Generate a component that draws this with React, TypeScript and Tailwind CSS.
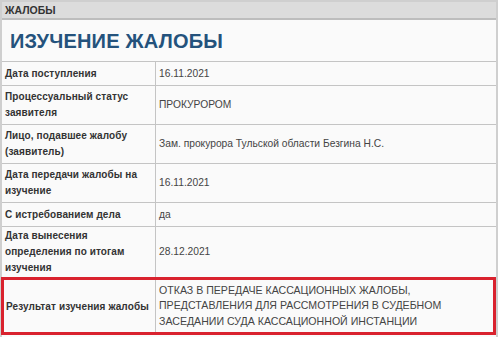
import React from "react";

const rows: { label: string[]; value: string[]; h: string }[] = [
  { label: ["Дата поступления"], value: ["16.11.2021"], h: "h-[24px]" },
  { label: ["Процессуальный статус", "заявителя"], value: ["ПРОКУРОРОМ"], h: "h-[39px]" },
  { label: ["Лицо, подавшее жалобу", "(заявитель)"], value: ["Зам. прокурора Тульской области Безгина Н.С."], h: "h-[39px]" },
  { label: ["Дата передачи жалобы на", "изучение"], value: ["16.11.2021"], h: "h-[39px]" },
  { label: ["С истребованием дела"], value: ["да"], h: "h-[24px]" },
  { label: ["Дата вынесения", "определения по итогам", "изучения"], value: ["28.12.2021"], h: "h-[51px]" },
];

export default function App() {
  return (
    <div
      className="w-[500px] h-[337px] bg-white overflow-hidden"
      style={{ fontFamily: '"Liberation Sans", Arial, sans-serif' }}
    >
      <div className="w-[498px] h-[337px] border-l-2 border-r-2 border-t-2 border-[#cfcfcf] bg-[#fafafa] flex flex-col">
        <div className="h-[18px] bg-[#dcdcdc] border-b-2 border-[#bdbdbd] flex items-center pl-[3px] text-[10.5px] font-bold text-[#333] leading-none">
          ЖАЛОБЫ
        </div>
        <div className="h-[41px] flex items-center pl-[8px]">
          <span className="text-[20px] font-bold text-[#24527c] leading-none tracking-[0.2px]">ИЗУЧЕНИЕ ЖАЛОБЫ</span>
        </div>
        {rows.map((r, i) => (
          <div key={i} className={`flex border-t border-[#c4c4c4] ${r.h}`}>
            <div className="w-[154px] border-r border-[#c4c4c4] flex flex-col justify-center pl-[3px] text-[10px] font-bold text-[#333] leading-[16px] tracking-[0.1px]">
              {r.label.map((l, j) => (
                <div key={j}>{l}</div>
              ))}
            </div>
            <div className="flex-1 flex flex-col justify-center pl-[3px] text-[10.25px] text-[#444] leading-[16px]">
              {r.value.map((l, j) => (
                <div key={j}>{l}</div>
              ))}
            </div>
          </div>
        ))}
        <div className="h-[58px] border-[3px] border-[#d9222e] flex -ml-px">
          <div className="w-[152px] border-r border-[#c4c4c4] flex items-center pl-[2px] text-[10px] font-bold text-[#333] tracking-[0.1px] whitespace-nowrap">
            Результат изучения жалобы
          </div>
          <div className="flex-1 flex flex-col justify-center pl-[3px] text-[10.6px] text-[#444] leading-[15.5px] whitespace-nowrap">
            <div>ОТКАЗ В ПЕРЕДАЧЕ КАССАЦИОННЫХ ЖАЛОБЫ,</div>
            <div>ПРЕДСТАВЛЕНИЯ ДЛЯ РАССМОТРЕНИЯ В СУДЕБНОМ</div>
            <div>ЗАСЕДАНИИ СУДА КАССАЦИОННОЙ ИНСТАНЦИИ</div>
          </div>
        </div>
      </div>
    </div>
  );
}
